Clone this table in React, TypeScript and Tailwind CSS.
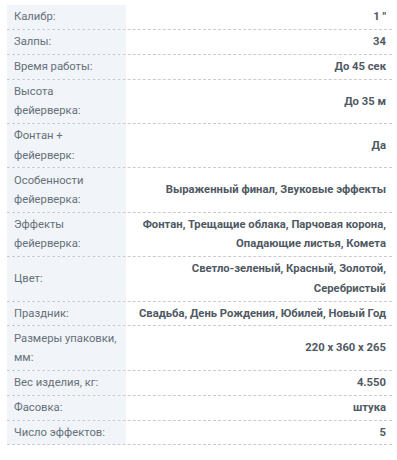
import React from 'react';

const ROWS: [string, string][] = [
  ['Калибр:', '1 "'],
  ['Залпы:', '34'],
  ['Время работы:', 'До 45 сек'],
  ['Высота фейерверка:', 'До 35 м'],
  ['Фонтан + фейерверк:', 'Да'],
  ['Особенности фейерверка:', 'Выраженный финал, Звуковые эффекты'],
  ['Эффекты фейерверка:', 'Фонтан, Трещащие облака, Парчовая корона, Опадающие листья, Комета'],
  ['Цвет:', 'Светло-зеленый, Красный, Золотой, Серебристый'],
  ['Праздник:', 'Свадьба, День Рождения, Юбилей, Новый Год'],
  ['Размеры упаковки, мм:', '220 x 360 x 265'],
  ['Вес изделия, кг:', '4.550'],
  ['Фасовка:', 'штука'],
  ['Число эффектов:', '5'],
];

export default function App() {
  return (
    <div className="w-[397px] h-[460px] bg-white pt-[5px] pl-[7px]" style={{ fontFamily: 'Roboto, "Noto Sans", sans-serif' }}>
      <div className="w-[385px] flex flex-col text-[11.25px] leading-[19.5px]">
        {ROWS.map(([label, value], i) => (
          <div key={i} className="flex border-b border-dashed border-[#c8ccd0]">
            <div className="w-[119px] shrink-0 flex items-center bg-[#f1f4f8] pl-[7px] pr-[4px] py-[2.2px] text-[#66707a]">
              {label}
            </div>
            <div className="flex-1 flex items-center justify-end text-right pl-[8px] pr-[6px] py-[2.2px] font-bold text-[#4f5963]">
              {value}
            </div>
          </div>
        ))}
      </div>
    </div>
  );
}
